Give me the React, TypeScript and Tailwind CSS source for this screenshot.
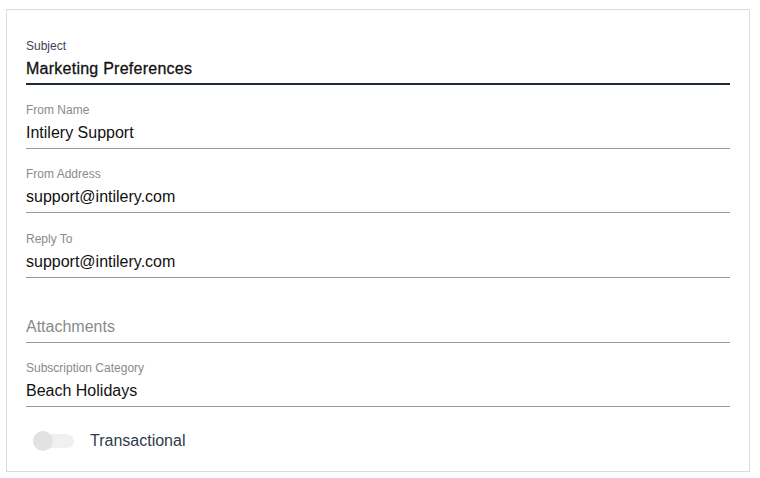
type Field = {
  label: string;
  value: string;
  focused?: boolean;
  className?: string;
};

const fields: Field[] = [
  { label: "Subject", value: "Marketing Preferences", focused: true },
  { label: "From Name", value: "Intilery Support", className: "mt-[18px]" },
  { label: "From Address", value: "support@intilery.com", className: "mt-[18px]" },
  { label: "Reply To", value: "support@intilery.com", className: "mt-[19px]" },
];

function TextField({ label, value, focused, className }: Field) {
  return (
    <div
      className={
        (focused
          ? "border-b-2 border-[#1f2b3b] pb-[4px] "
          : "border-b border-[#9a9a9a] pb-[5px] ") + (className ?? "")
      }
    >
      <label
        className={
          "block text-[12px] leading-[14px] " +
          (focused ? "text-[#3b4656]" : "text-[#8a8a8a]")
        }
      >
        {label}
      </label>
      <div
        className={
          "mt-[6px] text-[16px] leading-[20px] text-[#111] " +
          (focused ? "tracking-[0.25px] [-webkit-text-stroke:0.3px_#111]" : "")
        }
      >
        {value}
      </div>
    </div>
  );
}

export default function App() {
  return (
    <div
      className="h-[478px] w-[760px] bg-white pl-[6px] pt-[9px]"
      style={{ fontFamily: '"Liberation Sans", Arial, sans-serif' }}
    >
      <div className="h-[463px] w-[744px] border border-[#dcdcdc] px-[19px] pt-[29px]">
        {fields.map((f) => (
          <TextField key={f.label} {...f} />
        ))}

        <div className="mt-[39px] border-b border-[#9a9a9a] pb-[5px]">
          <div className="text-[16px] leading-[20px] text-[#8a8a8a]">
            Attachments
          </div>
        </div>

        <TextField
          label="Subscription Category"
          value="Beach Holidays"
          className="mt-[18px]"
        />

        <div className="mt-[24px] flex items-center">
          <div className="relative ml-[7px] h-[14px] w-[41px] rounded-full bg-[#f0f0f0]">
            <div className="absolute left-0 top-[-3px] h-[20px] w-[20px] rounded-full bg-[#e2e2e2]" />
          </div>
          <span className="ml-[16px] text-[16px] leading-[20px] text-[#2f3b4b]">
            Transactional
          </span>
        </div>
      </div>
    </div>
  );
}
